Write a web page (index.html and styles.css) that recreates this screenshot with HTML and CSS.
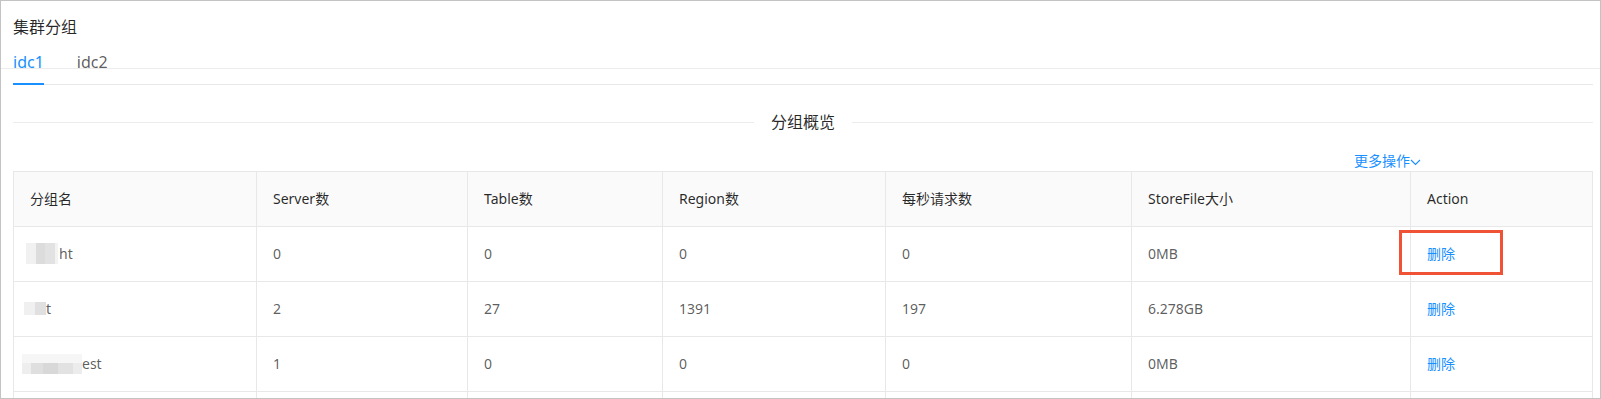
FILE: index.html
```html
<!DOCTYPE html>
<html lang="zh-CN">
<head>
    <meta charset="utf-8">
    <title>集群分组</title>
    <link rel="stylesheet" href="styles.css">
</head>
<body>
    <main class="quadro">
        <h1 class="titulo">集群分组</h1>

        <nav class="abas">
            <a class="aba ativa">idc1</a>
            <a class="aba">idc2</a>
        </nav>

        <div class="divisor"><span>分组概览</span></div>

        <div class="barra-acoes">
            <a class="mais-acoes">更多操作
                <svg width="11" height="8" viewBox="0 0 11 8"><path d="M1 2 L5.5 6.5 L10 2" fill="none" stroke="#1890ff" stroke-width="1.1"/></svg>
            </a>
        </div>

        <div class="tabela">
            <div class="linha cabecalho">
                <div class="celula">分组名</div>
                <div class="celula">Server数</div>
                <div class="celula">Table数</div>
                <div class="celula">Region数</div>
                <div class="celula">每秒请求数</div>
                <div class="celula">StoreFile大小</div>
                <div class="celula">Action</div>
            </div>
            <div class="linha">
                <div class="celula"><span class="mosaico m1"></span>ht</div>
                <div class="celula">0</div>
                <div class="celula">0</div>
                <div class="celula">0</div>
                <div class="celula">0</div>
                <div class="celula">0MB</div>
                <div class="celula"><a class="link">删除</a></div>
            </div>
            <div class="linha">
                <div class="celula"><span class="mosaico m2"></span>t</div>
                <div class="celula">2</div>
                <div class="celula">27</div>
                <div class="celula">1391</div>
                <div class="celula">197</div>
                <div class="celula">6.278GB</div>
                <div class="celula"><a class="link">删除</a></div>
            </div>
            <div class="linha">
                <div class="celula"><span class="mosaico m3"></span>est</div>
                <div class="celula">1</div>
                <div class="celula">0</div>
                <div class="celula">0</div>
                <div class="celula">0</div>
                <div class="celula">0MB</div>
                <div class="celula"><a class="link">删除</a></div>
            </div>
            <div class="linha">
                <div class="celula">&nbsp;</div>
                <div class="celula">&nbsp;</div>
                <div class="celula">&nbsp;</div>
                <div class="celula">&nbsp;</div>
                <div class="celula">&nbsp;</div>
                <div class="celula">&nbsp;</div>
                <div class="celula">&nbsp;</div>
            </div>
        </div>

        <!-- marcação vermelha sobre o primeiro botão -->
        <div class="destaque"></div>
    </main>
</body>
</html>
```

FILE: styles.css
```css
body {
    margin: 0;
    font-family: "Noto Sans", "Noto Sans CJK SC", sans-serif;
    background: white;
}

.quadro {
    position: relative;
    box-sizing: border-box;
    width: 1601px;
    height: 399px;
    overflow: hidden;
    border: 1px solid #c3c3c3;
    padding: 0 7px 0 12px;
}

/* linha fina que cruza a area das abas */
.quadro::before {
    content: "";
    position: absolute;
    left: 0;
    right: 0;
    top: 67px;
    height: 1px;
    background: #ececec;
}

.titulo {
    margin: 14px 0 0 0;
    font-size: 16px;
    line-height: 24px;
    font-weight: normal;
    color: rgba(0, 0, 0, .85);
}

.abas {
    display: flex;
    gap: 33px;
    padding-top: 11px;
    box-shadow: inset 0 -1px 0 #e8e8e8;
}

.aba {
    position: relative;
    font-size: 16px;
    line-height: 24px;
    padding-bottom: 9px;
    border-bottom: 2px solid transparent;
    color: rgba(0, 0, 0, .65);
}

.aba.ativa {
    color: #1890ff;
    border-bottom-color: #1890ff;
}

.divisor {
    display: flex;
    align-items: center;
    margin-top: 25px;
    font-size: 16px;
    line-height: 24px;
    color: rgba(0, 0, 0, .85);
}

.divisor::before,
.divisor::after {
    content: "";
    flex: 1;
    height: 1px;
    background: #ececec;
}

.divisor span {
    padding: 0 17px;
}

.barra-acoes {
    display: flex;
    justify-content: flex-end;
    margin-top: 17px;
    padding-right: 172px;
    font-size: 14px;
    line-height: 20px;
}

.mais-acoes {
    display: flex;
    align-items: center;
    color: #1890ff;
    cursor: pointer;
}

.mais-acoes svg {
    margin-top: 1px;
}

.tabela {
    width: 1580px;
    border-top: 1px solid #e8e8e8;
    border-left: 1px solid #e8e8e8;
    box-sizing: border-box;
    font-size: 14px;
    color: rgba(0, 0, 0, .65);
}

.linha {
    display: grid;
    grid-template-columns: 243px 211px 195px 223px 246px 279px 182px;
}

.celula {
    box-sizing: border-box;
    padding: 16px;
    line-height: 22px;
    border-right: 1px solid #e8e8e8;
    border-bottom: 1px solid #e8e8e8;
    white-space: nowrap;
}

.cabecalho .celula {
    background: #fafafa;
    color: rgba(0, 0, 0, .85);
    font-weight: normal;
}

.link {
    color: #1890ff;
    cursor: pointer;
}

.mosaico {
    display: inline-block;
    vertical-align: middle;
    margin-top: -3px;
}

.m1 {
    width: 32px;
    height: 21px;
    margin-left: -4px;
    margin-right: 1px;
    background:
        linear-gradient(90deg, #f1f1f1 0 30%, #dcdcdc 30% 60%, #e2e2e2 60% 90%, #f3f3f3 90%);
}

.m2 {
    width: 22px;
    height: 13px;
    margin-left: -6px;
    background: linear-gradient(90deg, #f0f0f0 0 50%, #e0e0e0 50%);
}

.m3 {
    width: 60px;
    height: 20px;
    margin-left: -8px;
    background:
        linear-gradient(180deg, #f6f6f6 0 45%, transparent 45%),
        linear-gradient(90deg, #eeeeee 0 15%, #dfdfdf 15% 35%, #d8d8d8 35% 60%, #e2e2e2 60% 85%, #ececec 85%);
}

.destaque {
    position: absolute;
    left: 1398px;
    top: 229px;
    width: 104px;
    height: 45px;
    box-sizing: border-box;
    border: 3px solid #ef5234;
}
```
